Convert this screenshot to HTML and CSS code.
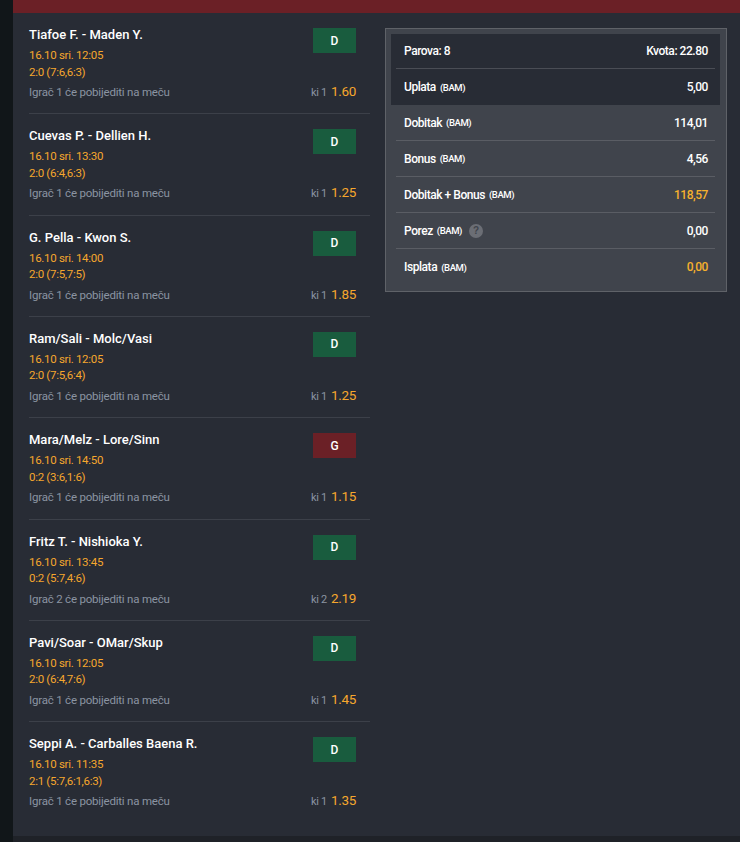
FILE: index.html
```html
<!DOCTYPE html>
<html lang="bs">
<head>
<meta charset="utf-8">
<title>Listić</title>
<link rel="stylesheet" href="styles.css">
</head>
<body>
<div class="app">
  <aside class="rail"></aside>
  <div class="main">
    <div class="topbar"></div>
    <div class="content">
      <section class="matches">
        <div class="match">
          <div class="title">Tiafoe F. - Maden Y.</div>
          <div class="badge win">D</div>
          <div class="date">16.10 sri. 12:05</div>
          <div class="score">2:0 (7:6,6:3)</div>
          <div class="bottom"><span class="pick">Igrač 1 će pobijediti na meču</span><span class="odd"><span class="mk">ki 1</span><span class="val">1.60</span></span></div>
        </div>
        <div class="match">
          <div class="title">Cuevas P. - Dellien H.</div>
          <div class="badge win">D</div>
          <div class="date">16.10 sri. 13:30</div>
          <div class="score">2:0 (6:4,6:3)</div>
          <div class="bottom"><span class="pick">Igrač 1 će pobijediti na meču</span><span class="odd"><span class="mk">ki 1</span><span class="val">1.25</span></span></div>
        </div>
        <div class="match">
          <div class="title">G. Pella - Kwon S.</div>
          <div class="badge win">D</div>
          <div class="date">16.10 sri. 14:00</div>
          <div class="score">2:0 (7:5,7:5)</div>
          <div class="bottom"><span class="pick">Igrač 1 će pobijediti na meču</span><span class="odd"><span class="mk">ki 1</span><span class="val">1.85</span></span></div>
        </div>
        <div class="match">
          <div class="title">Ram/Sali - Molc/Vasi</div>
          <div class="badge win">D</div>
          <div class="date">16.10 sri. 12:05</div>
          <div class="score">2:0 (7:5,6:4)</div>
          <div class="bottom"><span class="pick">Igrač 1 će pobijediti na meču</span><span class="odd"><span class="mk">ki 1</span><span class="val">1.25</span></span></div>
        </div>
        <div class="match">
          <div class="title">Mara/Melz - Lore/Sinn</div>
          <div class="badge lose">G</div>
          <div class="date">16.10 sri. 14:50</div>
          <div class="score">0:2 (3:6,1:6)</div>
          <div class="bottom"><span class="pick">Igrač 1 će pobijediti na meču</span><span class="odd"><span class="mk">ki 1</span><span class="val">1.15</span></span></div>
        </div>
        <div class="match">
          <div class="title">Fritz T. - Nishioka Y.</div>
          <div class="badge win">D</div>
          <div class="date">16.10 sri. 13:45</div>
          <div class="score">0:2 (5:7,4:6)</div>
          <div class="bottom"><span class="pick">Igrač 2 će pobijediti na meču</span><span class="odd"><span class="mk">ki 2</span><span class="val">2.19</span></span></div>
        </div>
        <div class="match">
          <div class="title">Pavi/Soar - OMar/Skup</div>
          <div class="badge win">D</div>
          <div class="date">16.10 sri. 12:05</div>
          <div class="score">2:0 (6:4,7:6)</div>
          <div class="bottom"><span class="pick">Igrač 1 će pobijediti na meču</span><span class="odd"><span class="mk">ki 1</span><span class="val">1.45</span></span></div>
        </div>
        <div class="match last">
          <div class="title">Seppi A. - Carballes Baena R.</div>
          <div class="badge win">D</div>
          <div class="date">16.10 sri. 11:35</div>
          <div class="score">2:1 (5:7,6:1,6:3)</div>
          <div class="bottom"><span class="pick">Igrač 1 će pobijediti na meču</span><span class="odd"><span class="mk">ki 1</span><span class="val">1.35</span></span></div>
        </div>
      </section>
      <section class="slip">
        <div class="slip-head">
          <div class="srow"><span class="lbl">Parova: 8</span><span class="num">Kvota: 22.80</span></div>
          <div class="srow"><span class="lbl">Uplata <small>(BAM)</small></span><span class="num">5,00</span></div>
        </div>
        <div class="slip-body">
          <div class="srow"><span class="lbl">Dobitak <small>(BAM)</small></span><span class="num">114,01</span></div>
          <div class="srow"><span class="lbl">Bonus <small>(BAM)</small></span><span class="num">4,56</span></div>
          <div class="srow"><span class="lbl">Dobitak + Bonus <small>(BAM)</small></span><span class="num hl">118,57</span></div>
          <div class="srow"><span class="lbl">Porez <small>(BAM)</small><span class="help">?</span></span><span class="num">0,00</span></div>
          <div class="srow"><span class="lbl">Isplata <small>(BAM)</small></span><span class="num hl">0,00</span></div>
        </div>
      </section>
    </div>
    <div class="footer-strip"></div>
  </div>
</div>
</body>
</html>
```
FILE: styles.css
```css
* { box-sizing: border-box; }
html, body { margin: 0; padding: 0; }
body {
  width: 740px;
  height: 842px;
  overflow: hidden;
  background: #282c35;
  font-family: Roboto, "Liberation Sans", sans-serif;
}
.app {
  display: flex;
  height: 842px;
}
.rail {
  width: 13px;
  flex: none;
  background: #111619;
}
.main {
  flex: 1;
  display: flex;
  flex-direction: column;
  background: #282c35;
}
.topbar {
  height: 13px;
  flex: none;
  background: #6b2026;
}
.content {
  flex: 1;
  display: flex;
  gap: 15px;
  padding: 0 13px 0 16px;
}
.footer-strip {
  height: 6px;
  flex: none;
  background: #1f2228;
}
.matches {
  width: 341px;
  flex: none;
}
.match {
  display: grid;
  grid-template-columns: 1fr auto;
  grid-template-rows: 20px 17px 17px 21px;
  padding: 13px 14px 12px 0;
  border-bottom: 1px solid #3c4049;
  height: 101.33px;
}
.match.last { border-bottom: none; }
.title {
  grid-column: 1;
  grid-row: 1;
  color: #ffffff;
  font-size: 13px;
  font-weight: 500;
  line-height: 18px;
  height: 18px;
}
.badge {
  grid-column: 2;
  grid-row: 1 / span 3;
  align-self: start;
  margin-top: 2px;
  width: 43px;
  height: 25px;
  display: flex;
  align-items: center;
  justify-content: center;
  color: #ffffff;
  font-size: 12px;
  font-weight: 500;
}
.badge.win { background: #195c3e; }
.badge.lose { background: #6b2026; }
.date, .score {
  grid-column: 1;
  color: #f6a72d;
  font-size: 11.5px;
  letter-spacing: -0.3px;
  line-height: 17px;
}
.date { margin-top: 1px; }
.score { margin-top: 0.5px; }
.bottom {
  grid-column: 1 / span 2;
  display: flex;
  justify-content: space-between;
  align-items: center;
  margin-top: 3px;
  height: 18px;
  line-height: 18px;
}
.pick {
  color: #8b94a2;
  font-size: 11.5px;
  letter-spacing: -0.2px;
}
.odd {
  display: flex;
  align-items: baseline;
}
.mk {
  color: #8b94a2;
  font-size: 11px;
  letter-spacing: -0.3px;
  margin-right: 4px;
}
.val {
  color: #f6a72d;
  font-size: 13.5px;
  font-weight: 400;
  letter-spacing: -0.3px;
}
.slip {
  margin-top: 15px;
  width: 342px;
  align-self: flex-start;
  border: 1px solid #5f6268;
  background: #40444c;
  padding: 5px 6px 6px 5px;
}
.slip-head {
  background: #282c35;
  padding: 0 5px;
}
.slip-body {
  padding: 0 5px;
}
.srow {
  display: flex;
  justify-content: space-between;
  align-items: center;
  height: 36px;
  padding: 0 7px 0 8px;
  border-bottom: 1px solid #5a5d64;
  color: #ffffff;
  font-size: 12px;
  font-weight: 500;
  letter-spacing: -0.45px;
}
.slip-head .srow { border-bottom-color: #4a4d55; }
.slip-head .srow:first-child { height: 35px; }
.srow:last-child { border-bottom: none; }
.srow small {
  font-size: 9.5px;
  margin-left: 4px;
  letter-spacing: -0.4px;
}
.lbl { display: flex; align-items: center; }
.num.hl { color: #f6b12d; }
.help {
  display: inline-flex;
  align-items: center;
  justify-content: center;
  width: 14px;
  height: 14px;
  margin-left: 7px;
  border-radius: 50%;
  background: #6b6e75;
  color: #40444c;
  font-family: "Liberation Sans", sans-serif;
  font-size: 10px;
  font-weight: 700;
  letter-spacing: 0;
}
```
